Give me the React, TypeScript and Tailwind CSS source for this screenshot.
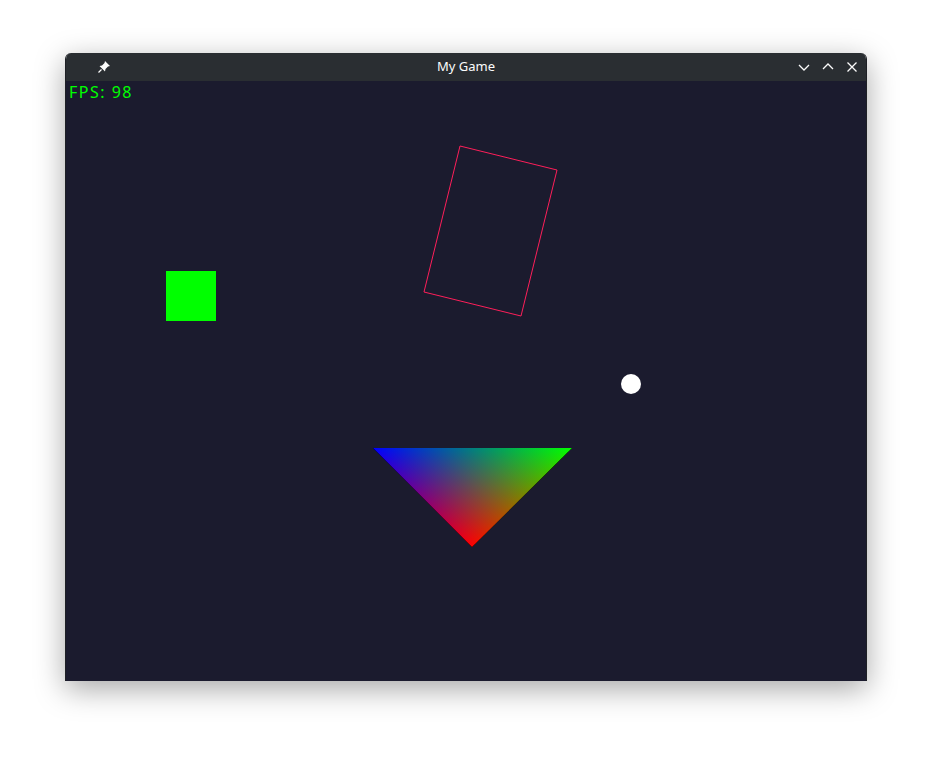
export default function App() {
  return (
    <div className="w-[932px] h-[759px] bg-white pl-[65px] pt-[53px] font-['Noto_Sans',sans-serif]">
      <div className="w-[802px] rounded-t-[6px] overflow-hidden shadow-[0_8px_30px_rgba(0,0,0,0.35)] border-x border-[#1e2025]">
        <div className="h-[28px] bg-[#2a2e32] flex items-center px-[30px] relative">
          <svg width="14" height="14" viewBox="0 0 14 14" className="absolute left-[31px] top-[7px]">
            <path d="M8 1 L13 6 L11 6.5 L8.5 9 L8 11.5 L2.5 6 L5 5.5 L7.5 3 Z" fill="#fcfcfc" />
            <path d="M4.5 9.5 L1.5 12.5" stroke="#fcfcfc" strokeWidth="1.3" />
          </svg>
          <div className="flex-1 text-center text-[13px] text-[#fcfcfc]">My Game</div>
          <div className="absolute right-[7px] top-0 h-[28px] flex items-center gap-[10px]">
            <svg width="14" height="14" viewBox="0 0 14 14"><path d="M2 5 L7 10 L12 5" stroke="#fcfcfc" strokeWidth="1.3" fill="none" /></svg>
            <svg width="14" height="14" viewBox="0 0 14 14"><path d="M2 9 L7 4 L12 9" stroke="#fcfcfc" strokeWidth="1.3" fill="none" /></svg>
            <svg width="14" height="14" viewBox="0 0 14 14"><path d="M2.5 2.5 L11.5 11.5 M11.5 2.5 L2.5 11.5" stroke="#fcfcfc" strokeWidth="1.3" /></svg>
          </div>
        </div>
        <div className="relative h-[600px] bg-[#1b1b2e]">
          <div className="absolute left-[3px] top-[-1px] text-[16px] text-[#00ff00] tracking-[1.5px] font-['Liberation_Sans',sans-serif]">FPS: 98</div>
          <svg width="800" height="600" className="block">
            <defs>
              <linearGradient id="gr" gradientUnits="userSpaceOnUse" x1="406" y1="466" x2="406" y2="367">
                <stop offset="0" stopColor="#ff0000" />
                <stop offset="1" stopColor="#000000" />
              </linearGradient>
              <linearGradient id="gb" gradientUnits="userSpaceOnUse" x1="307" y1="367" x2="406.5" y2="466.5">
                <stop offset="0" stopColor="#0000ff" />
                <stop offset="1" stopColor="#000000" />
              </linearGradient>
              <linearGradient id="gg" gradientUnits="userSpaceOnUse" x1="506" y1="367" x2="406.5" y2="466.5">
                <stop offset="0" stopColor="#00ff00" />
                <stop offset="1" stopColor="#000000" />
              </linearGradient>
            </defs>
            <rect x="100" y="190" width="50" height="50" fill="#00ff00" />
            <polygon points="394,65 491,89 455,235 358,211" fill="none" stroke="#ff1f5a" strokeWidth="1" />
            <circle cx="565" cy="303" r="10" fill="#ffffff" />
            <g className="isolate">
              <polygon points="307,367 506,367 406,466" fill="url(#gr)" />
              <polygon points="307,367 506,367 406,466" fill="url(#gb)" className="mix-blend-plus-lighter" />
              <polygon points="307,367 506,367 406,466" fill="url(#gg)" className="mix-blend-plus-lighter" />
            </g>
          </svg>
        </div>
      </div>
    </div>
  )
}
